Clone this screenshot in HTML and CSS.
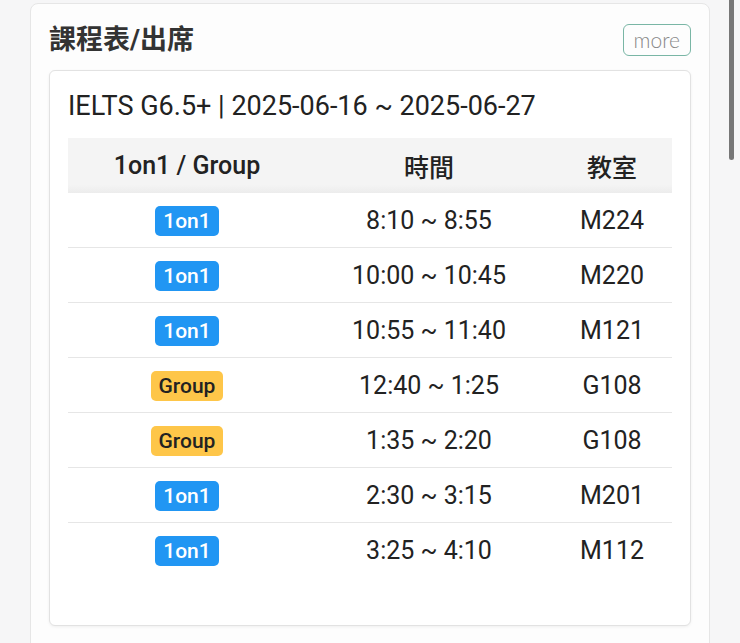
FILE: index.html
```html
<!DOCTYPE html>
<html>
  <head>
    <meta charset="utf-8">
    <title>課程表/出席</title>
    <link rel="stylesheet" href="styles.css">
  </head>
  <body>
    <div class="panel">
      <div class="panel-head">
        <h2>課程表/出席</h2>
        <a class="more" href="#">more</a>
      </div>
      <div class="box">
        <div class="box-title">IELTS G6.5+ | 2025-06-16 ~ 2025-06-27</div>
        <table class="schedule">
          <thead>
            <tr>
              <th class="c-type">1on1 / Group</th>
              <th class="c-time">時間</th>
              <th class="c-room">教室</th>
            </tr>
          </thead>
          <tbody>
            <tr><td><span class="tag one">1on1</span></td><td>8:10 ~ 8:55</td><td>M224</td></tr>
            <tr><td><span class="tag one">1on1</span></td><td>10:00 ~ 10:45</td><td>M220</td></tr>
            <tr><td><span class="tag one">1on1</span></td><td>10:55 ~ 11:40</td><td>M121</td></tr>
            <tr><td><span class="tag group">Group</span></td><td>12:40 ~ 1:25</td><td>G108</td></tr>
            <tr><td><span class="tag group">Group</span></td><td>1:35 ~ 2:20</td><td>G108</td></tr>
            <tr><td><span class="tag one">1on1</span></td><td>2:30 ~ 3:15</td><td>M201</td></tr>
            <tr><td><span class="tag one">1on1</span></td><td>3:25 ~ 4:10</td><td>M112</td></tr>
          </tbody>
        </table>
      </div>
    </div>
    <div class="scroll-thumb"></div>
  </body>
</html>
```

FILE: styles.css
```css
html, body {
  margin: 0;
  height: 100%;
  overflow: hidden;
}
body {
  background: #f6f6f7;
  padding: 3px 0 0 30px;
  font-family: Roboto, "Noto Sans CJK TC", sans-serif;
  color: #222;
}
.panel {
  width: 642px;
  height: 660px;
  padding: 20px 18px 0;
  background: #fdfdfd;
  border: 1px solid #e6e6e6;
  border-radius: 8px;
}
.panel-head {
  display: flex;
  justify-content: space-between;
  align-items: center;
  height: 32px;
  margin-bottom: 14px;
}
.panel-head h2 {
  margin: 0;
  font-size: 27px;
  font-weight: 700;
  color: #333;
  font-family: Roboto, "Noto Sans CJK TC", sans-serif;
  position: relative;
  top: -3px;
}
.more {
  box-sizing: border-box;
  height: 32px;
  line-height: 29px;
  padding: 0 10px;
  border: 1.5px solid #79b6a5;
  border-radius: 6px;
  color: #888;
  font-family: Lato, sans-serif;
  font-weight: 300;
  font-size: 21px;
  text-decoration: none;
}
.box {
  height: 537px;
  padding: 17px 18px 0;
  background: #fff;
  border: 1px solid #e2e2e2;
  border-radius: 6px;
  box-shadow: 0 1px 3px rgba(0, 0, 0, .06);
}
.box-title {
  font-size: 27px;
  line-height: 36px;
  margin-bottom: 14px;
}
.schedule {
  width: 100%;
  border-collapse: collapse;
  font-size: 25px;
}
.schedule th {
  height: 55px;
  padding: 0;
  font-weight: 500;
  background: linear-gradient(#f4f4f4 85%, #ececec);
}
.schedule td {
  height: 54px;
  padding: 0;
  text-align: center;
  border-bottom: 1px solid #e6e6e6;
}
.schedule tr:last-child td {
  border-bottom: 0;
}
.c-type {
  width: 238px;
}
.c-room {
  width: 120px;
}
.tag {
  display: inline-block;
  height: 30px;
  line-height: 31px;
  padding: 0 8px;
  border-radius: 5px;
  font-size: 21px;
  font-weight: 500;
  vertical-align: middle;
}
.one {
  background: #2196f3;
  color: #fff;
}
.group {
  background: #fec649;
  color: #222;
}
.scroll-thumb {
  position: absolute;
  top: 0;
  left: 729px;
  width: 5px;
  height: 160px;
  background: #777;
  border-radius: 0 0 3px 3px;
}
```
